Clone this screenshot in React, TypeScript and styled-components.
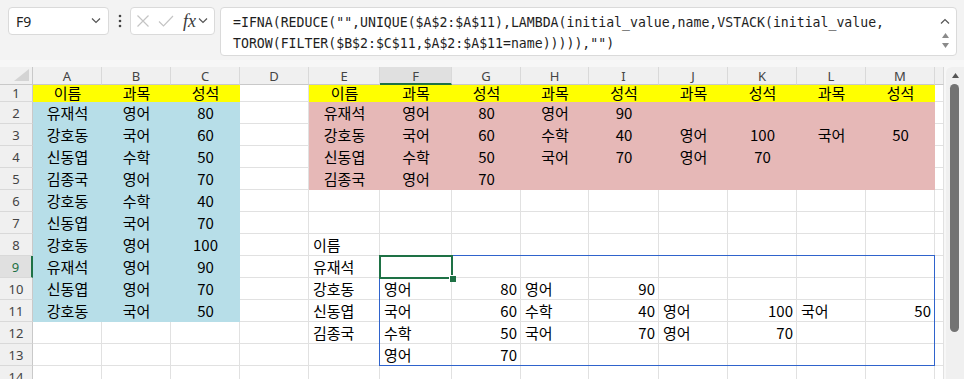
import React from 'react'
import styled, { createGlobalStyle } from 'styled-components'

const GlobalStyle = createGlobalStyle`
  html, body {
    margin: 0;
    padding: 0;
    background: #ffffff;
    overflow: hidden;
  }
`

const CELL_FONT = `"Noto Sans CJK KR", "Noto Sans", sans-serif`
const UI_FONT = `"Noto Sans", "Open Sans", sans-serif`

const YELLOW = '#ffff00'
const BLUE = '#b7dee8'
const PINK = '#e6b8b7'
const GRID = '#e1e1e1'
const GREEN = '#1e7145'
const SPILL = '#2f63cc'

// column widths: row header, A..M, partial N
const WIDTHS = [33, 69, 69, 69, 69, 71, 72, 69, 68, 70, 69, 69, 69, 69, 9]
const LETTERS = ['A', 'B', 'C', 'D', 'E', 'F', 'G', 'H', 'I', 'J', 'K', 'L', 'M', '']
const ROWS = 14

const Page = styled.div`
  width: 964px;
  height: 379px;
  display: flex;
  flex-direction: column;
  overflow: hidden;
  background: #f5f5f5;
`

const FormulaBar = styled.div`
  height: 60px;
  flex: none;
  display: flex;
  align-items: flex-start;
  padding: 7px 7px 0 8px;
  box-sizing: border-box;
  background: #f3f3f3;
`

const Box = styled.div`
  background: #ffffff;
  border: 1px solid #dadada;
  border-radius: 4px;
  box-sizing: border-box;
`

const NameBox = styled(Box)`
  width: 101px;
  height: 28px;
  display: flex;
  align-items: center;
  justify-content: space-between;
  padding: 0 7px 0 7px;
  font-family: ${UI_FONT};
  font-size: 14px;
  color: #222;
`

const Dots = styled.div`
  width: 21px;
  height: 28px;
  display: flex;
  align-items: center;
  justify-content: center;
`

const FxBox = styled(Box)`
  width: 85px;
  height: 28px;
  display: flex;
  align-items: center;
  padding: 0 4px 0 5px;
  gap: 8px;
`

const FxText = styled.span`
  font-family: "Liberation Serif", serif;
  font-style: italic;
  font-size: 18px;
  color: #3a3a3a;
  margin-left: 1px;
  margin-right: -6px;
  line-height: 1;
`

const FormulaBox = styled(Box)`
  margin-left: 5px;
  flex: 1;
  height: 49px;
  display: flex;
  padding: 4px 4px 0 12px;
`

const FormulaText = styled.div`
  flex: 1;
  font-family: "DejaVu Sans Mono", "Liberation Mono", monospace;
  font-size: 13.2px;
  line-height: 21px;
  color: #1e1e1e;
  white-space: pre;
`

const FormulaScroll = styled.div`
  width: 14px;
  display: flex;
  flex-direction: column;
  align-items: center;
  padding-top: 6px;
  gap: 9px;
`

const Stepper = styled.div`
  display: flex;
  flex-direction: column;
  gap: 5px;
`

const SheetArea = styled.div`
  flex: 1;
  display: flex;
  padding-top: 7px;
  background: #f7f7f7;
  min-height: 0;
`

const Grid = styled.div`
  display: grid;
  grid-template-columns: ${WIDTHS.map(w => `${w}px`).join(' ')};
  grid-template-rows: 18px 17px repeat(${ROWS - 1}, 22px);
  background: #ffffff;
  overflow: hidden;
  align-self: flex-start;
`

const Corner = styled.div`
  grid-row: 1;
  grid-column: 1;
  background: #f0f0f0;
  border-right: 1px solid #c9c9c9;
  border-bottom: 1px solid #c9c9c9;
  box-sizing: border-box;
  display: flex;
  align-items: flex-end;
  justify-content: flex-end;
  padding: 0 3px 3px 0;
`

const ColHead = styled.div<{ $c: number; $sel?: boolean }>`
  grid-row: 1;
  grid-column: ${p => p.$c};
  background: ${p => (p.$sel ? '#e0e0e0' : '#f0f0f0')};
  border-right: 1px solid #d9d9d9;
  border-bottom: ${p => (p.$sel ? `2px solid ${GREEN}` : '1px solid #c9c9c9')};
  box-sizing: border-box;
  display: flex;
  align-items: center;
  justify-content: center;
  font-family: ${UI_FONT};
  font-size: 13px;
  line-height: 16px;
  color: #444;
  padding-top: 1px;
`

const RowHead = styled.div<{ $r: number; $sel?: boolean }>`
  grid-row: ${p => p.$r};
  grid-column: 1;
  background: ${p => (p.$sel ? '#e0e0e0' : '#f0f0f0')};
  border-bottom: 1px solid #d9d9d9;
  border-right: ${p => (p.$sel ? `2px solid ${GREEN}` : '1px solid #c9c9c9')};
  box-sizing: border-box;
  display: flex;
  align-items: center;
  justify-content: center;
  font-family: ${UI_FONT};
  font-size: 13px;
  color: ${p => (p.$sel ? GREEN : '#444')};
`

const Cell = styled.div<{ $r: number; $c: number; $fill?: string; $align: string; $short?: boolean }>`
  grid-row: ${p => p.$r};
  grid-column: ${p => p.$c};
  background: ${p => p.$fill || '#ffffff'};
  border-right: 1px solid ${p => p.$fill || GRID};
  border-bottom: 1px solid ${p => p.$fill || GRID};
  box-sizing: border-box;
  display: flex;
  align-items: flex-end;
  justify-content: ${p => p.$align};
  padding: 0 3px ${p => (p.$short ? '0' : '2px')} 4px;
  overflow: hidden;
  font-family: ${CELL_FONT};
  font-size: 15px;
  line-height: 16px;
  color: #000;
  white-space: nowrap;
`

const SpillFrame = styled.div`
  grid-row: 10 / 15;
  grid-column: 7 / 15;
  margin: -1px 0 0 -1px;
  border: 1px solid ${SPILL};
  pointer-events: none;
  z-index: 1;
`

const Selection = styled.div`
  grid-row: 10;
  grid-column: 7;
  margin: -1px -1px -1px -1px;
  border: 2px solid ${GREEN};
  position: relative;
  z-index: 2;
`

const Handle = styled.div`
  position: absolute;
  right: -5px;
  bottom: -5px;
  width: 6px;
  height: 6px;
  background: ${GREEN};
  border: 1px solid #ffffff;
  border-right: none;
  border-bottom: none;
`

const ScrollTrack = styled.div`
  width: 18px;
  margin-left: 2px;
  background: #f0f0f0;
  border-radius: 6px 0 0 0;
  display: flex;
  flex-direction: column;
  align-items: center;
  padding-top: 6px;
  gap: 6px;
`

const Thumb = styled.div`
  width: 9px;
  height: 248px;
  border-radius: 5px;
  background: #737373;
  margin-left: -1px;
`

const Chevron = ({ up }: { up?: boolean }) => (
  <svg width="10" height="6" viewBox="0 0 10 6">
    <polyline
      points={up ? '1,5.5 5,1.5 9,5.5' : '1,0.5 5,4.5 9,0.5'}
      fill="none"
      stroke="#555"
      strokeWidth="1.2"
    />
  </svg>
)

const Tri = ({ up, color }: { up?: boolean; color: string }) => (
  <svg width="7" height="5" viewBox="0 0 7 5">
    <polygon points={up ? '0,5 3.5,0 7,5' : '0,0 3.5,5 7,0'} fill={color} />
  </svg>
)

type Entry = { v: string; align: 'center' | 'flex-start' | 'flex-end' }

const cells: Record<string, Entry> = {}
const put = (row: number, startCol: string, vals: string[], align?: Entry['align']) => {
  const s = LETTERS.indexOf(startCol)
  vals.forEach((v, i) => {
    if (!v) return
    const col = LETTERS[s + i]
    const a = align || (/^\d+$/.test(v) ? 'flex-end' : 'flex-start')
    cells[`${col}${row}`] = { v, align: a }
  })
}

put(1, 'A', ['이름', '과목', '성석'], 'center')
const source = [
  ['유재석', '영어', '80'],
  ['강호동', '국어', '60'],
  ['신동엽', '수학', '50'],
  ['김종국', '영어', '70'],
  ['강호동', '수학', '40'],
  ['신동엽', '국어', '70'],
  ['강호동', '영어', '100'],
  ['유재석', '영어', '90'],
  ['신동엽', '영어', '70'],
  ['강호동', '국어', '50'],
]
source.forEach((r, i) => put(i + 2, 'A', r, 'center'))

put(1, 'E', ['이름', '과목', '성석', '과목', '성석', '과목', '성석', '과목', '성석'], 'center')
put(2, 'E', ['유재석', '영어', '80', '영어', '90'], 'center')
put(3, 'E', ['강호동', '국어', '60', '수학', '40', '영어', '100', '국어', '50'], 'center')
put(4, 'E', ['신동엽', '수학', '50', '국어', '70', '영어', '70'], 'center')
put(5, 'E', ['김종국', '영어', '70'], 'center')

put(8, 'E', ['이름'])
put(9, 'E', ['유재석'])
put(10, 'E', ['강호동', '영어', '80', '영어', '90'])
put(11, 'E', ['신동엽', '국어', '60', '수학', '40', '영어', '100', '국어', '50'])
put(12, 'E', ['김종국', '수학', '50', '국어', '70', '영어', '70'])
put(13, 'F', ['영어', '70'])

const fillFor = (row: number, ci: number): string | undefined => {
  const col = LETTERS[ci]
  if (!col) return undefined
  const inAC = ci <= 2
  const inEM = ci >= 4 && ci <= 12
  if (row === 1 && (inAC || inEM)) return YELLOW
  if (inAC && row >= 2 && row <= 11) return BLUE
  if (inEM && row >= 2 && row <= 5) return PINK
  return undefined
}

const App: React.FC = () => {
  const body: React.ReactNode[] = []
  for (let row = 1; row <= ROWS; row++) {
    const gr = row + 1
    body.push(
      <RowHead key={`h${row}`} $r={gr} $sel={row === 9}>
        {row}
      </RowHead>
    )
    LETTERS.forEach((col, ci) => {
      const e = cells[`${col}${row}`]
      body.push(
        <Cell
          key={`${col}-${ci}-${row}`}
          $r={gr}
          $c={ci + 2}
          $fill={fillFor(row, ci)}
          $align={e ? e.align : 'flex-start'}
          $short={row === 1}
        >
          {e ? e.v : ''}
        </Cell>
      )
    })
  }

  return (
    <Page>
      <GlobalStyle />
      <FormulaBar>
        <NameBox>
          <span>F9</span>
          <Chevron />
        </NameBox>
        <Dots>
          <svg width="4" height="14" viewBox="0 0 4 14">
            <circle cx="2" cy="2" r="1.3" fill="#444" />
            <circle cx="2" cy="7" r="1.3" fill="#444" />
            <circle cx="2" cy="12" r="1.3" fill="#444" />
          </svg>
        </Dots>
        <FxBox>
          <svg width="14" height="14" viewBox="0 0 14 14">
            <path d="M1.5 1.5 L12.5 12.5 M12.5 1.5 L1.5 12.5" stroke="#c4c4c4" strokeWidth="1.2" fill="none" />
          </svg>
          <svg width="16" height="14" viewBox="0 0 16 14">
            <polyline points="1,7.5 5.5,12 15,2" stroke="#c4c4c4" strokeWidth="1.2" fill="none" />
          </svg>
          <FxText>fx</FxText>
          <Chevron />
        </FxBox>
        <FormulaBox>
          <FormulaText>
            {'=IFNA(REDUCE("",UNIQUE($A$2:$A$11),LAMBDA(initial_value,name,VSTACK(initial_value,\nTOROW(FILTER($B$2:$C$11,$A$2:$A$11=name))))),"")'}
          </FormulaText>
          <FormulaScroll>
            <Chevron up />
            <Stepper>
              <Tri up color="#8a8a8a" />
              <Tri color="#8a8a8a" />
            </Stepper>
          </FormulaScroll>
        </FormulaBox>
      </FormulaBar>
      <SheetArea>
        <Grid>
          <Corner>
            <svg width="15" height="12" viewBox="0 0 15 12">
              <polygon points="15,0 15,12 0,12" fill="#d4d4d4" />
            </svg>
          </Corner>
          {LETTERS.map((l, i) => (
            <ColHead key={`c${i}`} $c={i + 2} $sel={l === 'F'}>
              {l}
            </ColHead>
          ))}
          {body}
          <SpillFrame />
          <Selection>
            <Handle />
          </Selection>
        </Grid>
        <ScrollTrack>
          <Tri up color="#555" />
          <Thumb />
        </ScrollTrack>
      </SheetArea>
    </Page>
  )
}

export default App
